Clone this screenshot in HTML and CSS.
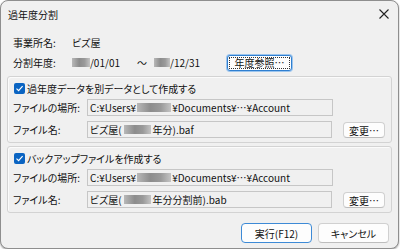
FILE: index.html
```html
<!DOCTYPE html>
<html lang="ja">
<head>
    <meta charset="UTF-8">
    <title>過年度分割</title>
    <link rel="stylesheet" href="styles.css">
</head>
<body>
    <div class="window">
        <div class="titlebar">
            <span class="title">過年度分割</span>
            <svg class="close" width="10" height="10" viewBox="0 0 10 10">
                <path d="M0.5 0.5 L9.5 9.5 M9.5 0.5 L0.5 9.5" stroke="#222" stroke-width="1.1" fill="none"/>
            </svg>
        </div>

        <div class="content">
            <div class="info">
                <div class="info-row">
                    <span class="info-label">事業所名:</span>
                    <span>ビズ屋</span>
                </div>
                <div class="info-row">
                    <span class="info-label">分割年度:</span>
                    <span class="date"><span class="blur year"></span>/01/01</span>
                    <span class="tilde">〜</span>
                    <span class="date"><span class="blur year2"></span>/12/31</span>
                    <button class="btn focused ref-btn"><span class="focus-ring">年度参照…</span></button>
                </div>
            </div>

            <div class="group">
                <label class="check-row">
                    <span class="checkbox">
                        <svg width="9" height="9" viewBox="0 0 9 9"><path d="M1.5 4.6 L3.6 6.6 L7.6 2.2" stroke="#fff" stroke-width="1.2" fill="none"/></svg>
                    </span>
                    過年度データを別データとして作成する
                </label>
                <div class="field-row">
                    <span class="field-label">ファイルの場所:</span>
                    <div class="textbox">C:¥Users¥<span class="blur path"></span>¥Documents¥…¥Account</div>
                </div>
                <div class="field-row">
                    <span class="field-label">ファイル名:</span>
                    <div class="textbox">ビズ屋(<span class="blur name"></span>年分).baf</div>
                    <button class="btn small-btn">変更…</button>
                </div>
            </div>

            <div class="group">
                <label class="check-row">
                    <span class="checkbox">
                        <svg width="9" height="9" viewBox="0 0 9 9"><path d="M1.5 4.6 L3.6 6.6 L7.6 2.2" stroke="#fff" stroke-width="1.2" fill="none"/></svg>
                    </span>
                    バックアップファイルを作成する
                </label>
                <div class="field-row">
                    <span class="field-label">ファイルの場所:</span>
                    <div class="textbox">C:¥Users¥<span class="blur path"></span>¥Documents¥…¥Account</div>
                </div>
                <div class="field-row">
                    <span class="field-label">ファイル名:</span>
                    <div class="textbox">ビズ屋(<span class="blur name"></span>年分分割前).bab</div>
                    <button class="btn small-btn">変更…</button>
                </div>
            </div>

            <div class="actions">
                <button class="btn default-btn">実行(F12)</button>
                <button class="btn">キャンセル</button>
            </div>
        </div>
    </div>
</body>
</html>
```

FILE: styles.css
```css
body {
    margin: 0;
    background-color: #fff;
    font-family: "Noto Sans CJK JP", sans-serif;
    font-size: 10px;
    font-feature-settings: "palt";
    color: #111;
}

.window {
    width: 397px;
    height: 247px;
    border: 1px solid #8e8e8e;
    border-radius: 8px;
    background-color: #f0f0f0;
    box-shadow: 0 1px 2px rgba(0, 0, 0, 0.35);
    overflow: hidden;
}

.titlebar {
    height: 27px;
    display: flex;
    align-items: center;
    justify-content: space-between;
    padding: 0 9px 1px 7px;
}

.close {
    margin-top: -1px;
}

.content {
    padding: 3px 6px 0 6px;
}

/* top info rows */
.info {
    padding-left: 6px;
}

.info-row {
    height: 20px;
    display: flex;
    align-items: center;
}

.info-row + .info-row {
    height: 21px;
}

.info-label {
    width: 59px;
}

.date {
    display: flex;
    align-items: center;
    width: 48px;
}

.blur {
    display: inline-block;
    height: 9px;
    background: linear-gradient(90deg, #b8b8b8, #8c8c8c 40%, #9a9a9a 70%, #c4c4c4);
    filter: blur(0.6px);
}

.year {
    width: 18px;
}

.year2 {
    width: 16px;
}

.tilde {
    margin: 0 7px 0 17px;
}

.path {
    width: 34px;
    margin: 0 1px;
}

.name {
    width: 27px;
    margin: 0 2px;
}

/* buttons */
.btn {
    font-family: inherit;
    font-size: 10px;
    font-feature-settings: "palt";
    color: #111;
    background-color: #fdfdfd;
    border: 1px solid #d0d0d0;
    border-bottom-color: #bdbdbd;
    border-radius: 4px;
    padding: 0;
    height: 20px;
    width: 71px;
    display: flex;
    align-items: center;
    justify-content: center;
}

.ref-btn {
    width: 65px;
    height: 16px;
    margin-left: 25px;
    padding: 1px;
}

.focused {
    border: 1px solid #2f7fd0;
    box-shadow: 0 0 0 1px #9cc5ee;
    border-radius: 3px;
}

.focus-ring {
    flex: 1;
    align-self: stretch;
    display: flex;
    align-items: center;
    justify-content: center;
    border: 1px dotted #333;
}

.small-btn {
    width: 42px;
    height: 16px;
    margin-left: 11px;
}

.default-btn {
    border: 1px solid #3d8ad6;
}

/* group boxes */
.group {
    margin-top: 3px;
    height: 65px;
    border: 1px solid #d3d3d3;
    border-radius: 3px;
    box-shadow: inset 1px 1px 0 #fbfbfb;
    padding: 0 6px 0 5px;
}

.check-row {
    height: 22px;
    display: flex;
    align-items: center;
    gap: 2px;
    padding-left: 1px;
}

.checkbox {
    width: 11px;
    height: 11px;
    border-radius: 2px;
    background-color: #0a64c2;
    display: flex;
    align-items: center;
    justify-content: center;
}

.field-row {
    display: flex;
    align-items: flex-end;
}

.field-row + .field-row {
    margin-top: 5px;
}

.field-label {
    width: 74px;
    align-self: center;
}

.textbox {
    width: 242px;
    height: 15px;
    border: 1px solid #c6c6c6;
    background-color: #f0f0f0;
    padding-left: 2px;
    display: flex;
    align-items: center;
    white-space: nowrap;
}

/* bottom buttons */
.actions {
    display: flex;
    justify-content: flex-end;
    gap: 6px;
    margin-top: 10px;
    padding-right: 3px;
}
```
